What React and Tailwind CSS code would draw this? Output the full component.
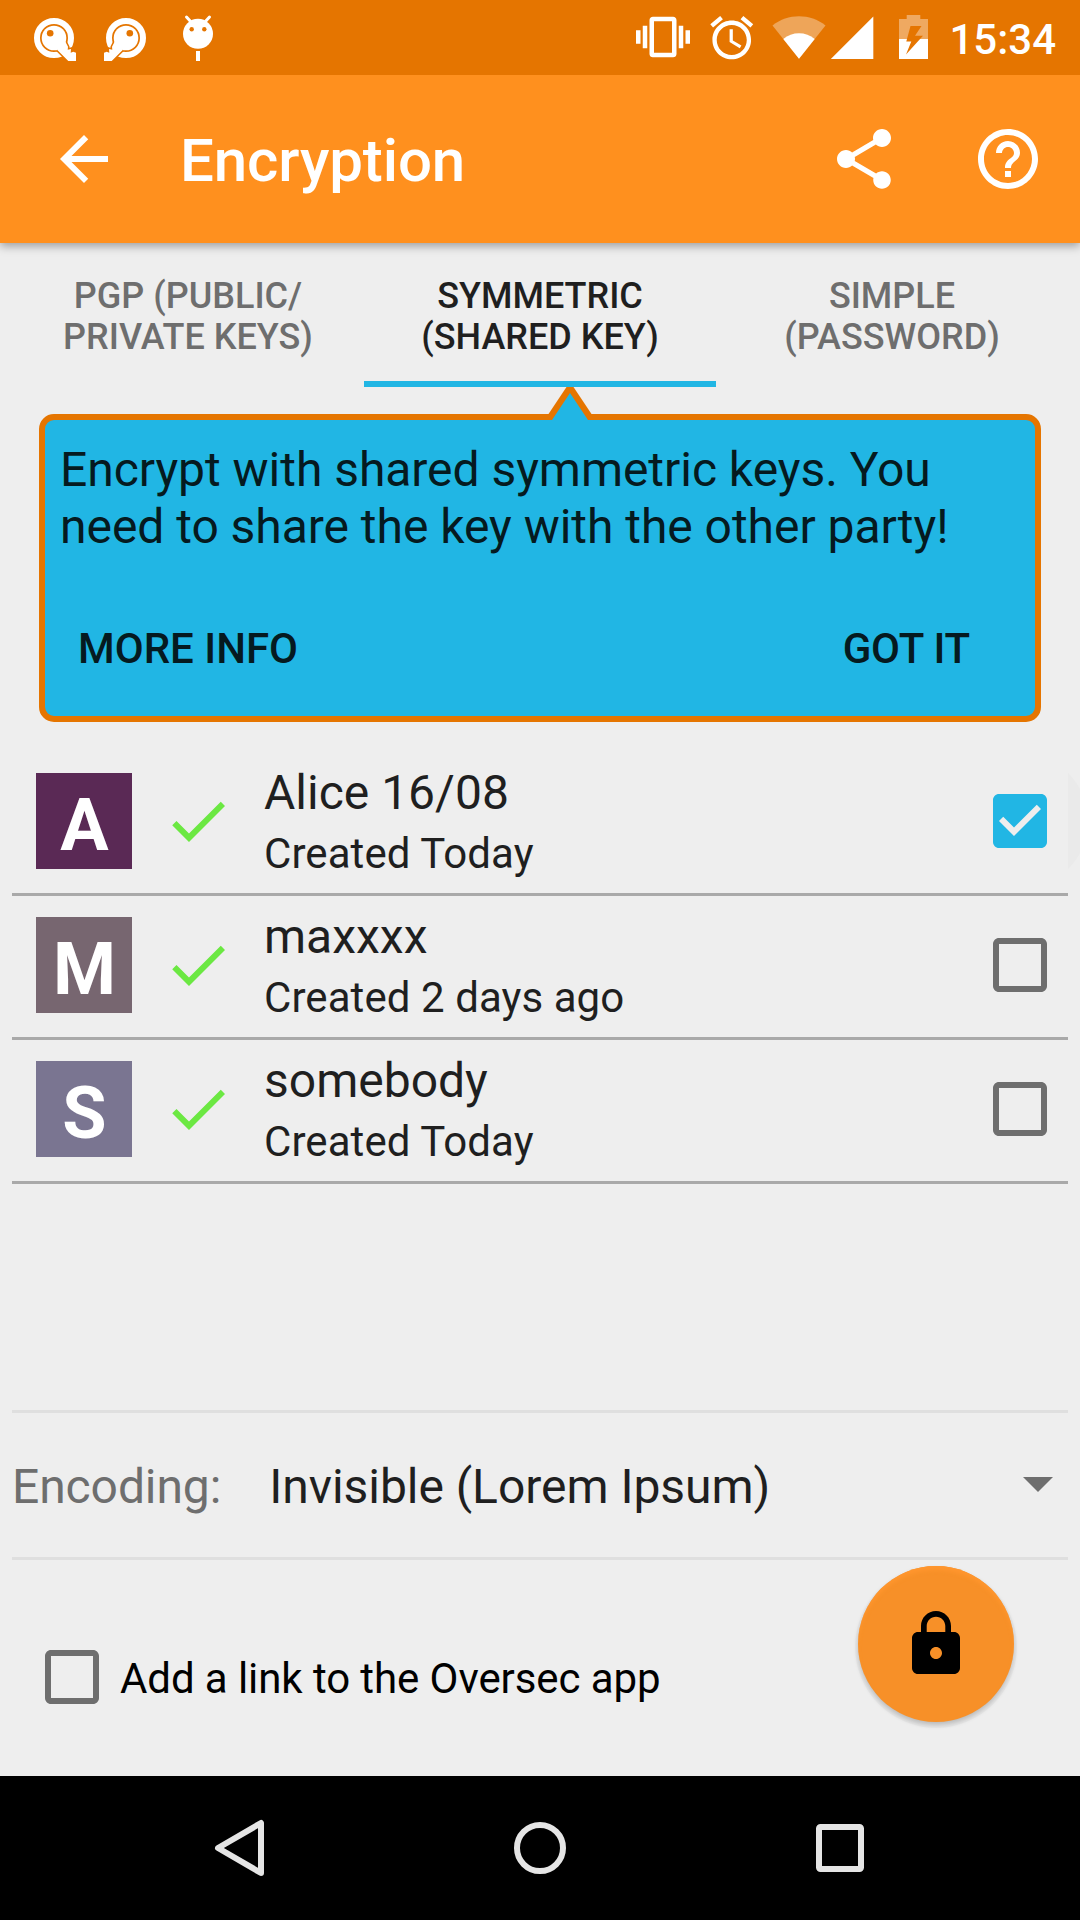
const CHECK = 'M9 16.17L4.83 12l-1.42 1.41L9 19 21 7l-1.41-1.41z';
const CHECK_BOX =
  'M19 3H5c-1.11 0-2 .9-2 2v14c0 1.1.89 2 2 2h14c1.11 0 2-.9 2-2V5c0-1.1-.89-2-2-2zm-9 14l-5-5 1.41-1.41L10 14.17l7.59-7.59L19 8l-9 9z';
const CHECK_BOX_BLANK =
  'M19 5v14H5V5h14m0-2H5c-1.1 0-2 .9-2 2v14c0 1.1.9 2 2 2h14c1.1 0 2-.9 2-2V5c0-1.1-.9-2-2-2z';
const BACK = 'M20 11H7.83l5.59-5.59L12 4l-8 8 8 8 1.41-1.41L7.83 13H20v-2z';
const SHARE =
  'M18 16.08c-.76 0-1.44.3-1.96.77L8.91 12.7c.05-.23.09-.46.09-.7s-.04-.47-.09-.7l7.05-4.11c.54.5 1.25.81 2.04.81 1.66 0 3-1.34 3-3s-1.34-3-3-3-3 1.34-3 3c0 .24.04.47.09.7L8.04 9.81C7.5 9.31 6.79 9 6 9c-1.66 0-3 1.34-3 3s1.34 3 3 3c.79 0 1.5-.31 2.04-.81l7.12 4.16c-.05.21-.08.43-.08.65 0 1.61 1.31 2.92 2.92 2.92 1.61 0 2.92-1.31 2.92-2.92s-1.31-2.92-2.92-2.92z';
const HELP =
  'M11 18h2v-2h-2v2zm1-16C6.48 2 2 6.48 2 12s4.48 10 10 10 10-4.48 10-10S17.52 2 12 2zm0 18c-4.41 0-8-3.59-8-8s3.59-8 8-8 8 3.59 8 8-3.59 8-8 8zm0-14c-2.21 0-4 1.79-4 4h2c0-1.1.9-2 2-2s2 .9 2 2c0 2-3 1.75-3 5h2c0-2.25 3-2.5 3-5 0-2.21-1.79-4-4-4z';
const LOCK =
  'M18 8h-1V6c0-2.76-2.24-5-5-5S7 3.24 7 6v2H6c-1.1 0-2 .9-2 2v10c0 1.1.9 2 2 2h12c1.1 0 2-.9 2-2V10c0-1.1-.9-2-2-2zm-6 9c-1.1 0-2-.9-2-2s.9-2 2-2 2 .9 2 2-.9 2-2 2zm3.1-9H8.9V6c0-1.71 1.39-3.1 3.1-3.1 1.71 0 3.1 1.39 3.1 3.1v2z';
const VIBRATE =
  'M0 15h2V9H0v6zm3 2h2V7H3v10zm19-8v6h2V9h-2zm-3 8h2V7h-2v10zM16.5 3h-9C6.67 3 6 3.67 6 4.5v15c0 .83.67 1.5 1.5 1.5h9c.83 0 1.5-.67 1.5-1.5v-15c0-.83-.67-1.5-1.5-1.5zM16 19H8V5h8v14z';
const ALARM =
  'M22 5.72l-4.6-3.86-1.29 1.53 4.6 3.86L22 5.72zM7.88 3.39L6.6 1.86 2 5.71l1.29 1.53 4.59-3.85zM12.5 8H11v6l4.75 2.85.75-1.23-4-2.37V8zM12 4c-4.97 0-9 4.03-9 9s4.02 9 9 9c4.97 0 9-4.03 9-9s-4.03-9-9-9zm0 16c-3.87 0-7-3.13-7-7s3.13-7 7-7 7 3.13 7 7-3.13 7-7 7z';
const KEY_SHAFT =
  'M27.300 36L38.300 47H46V38.700L43.300 37.700L40.700 38.700L41 35L37.700 35.700L38 32.700L35 27Z';

function Icon({ d, className = 'size-[72px]' }) {
  return (
    <svg viewBox="0 0 24 24" fill="currentColor" className={'shrink-0 ' + className}>
      <path d={d} />
    </svg>
  );
}

function KeyRing({ className = '' }) {
  return (
    <svg viewBox="0 0 48 48" className={'size-12 shrink-0 ' + className}>
      <circle cx="24" cy="24" r="17" fill="none" stroke="#fff" strokeWidth="6" />
      <path d={KEY_SHAFT} fill="#fff" stroke="#e57500" strokeWidth="3" />
      <path d={KEY_SHAFT} fill="#fff" />
      <circle cx="24" cy="24" r="12.300" fill="#fff" />
      <circle cx="20.200" cy="19.300" r="3.300" fill="#e57500" />
    </svg>
  );
}

function StatusBar() {
  return (
    <div className="relative z-20 flex h-[75px] items-start bg-[#e57500] text-white">
      <KeyRing className="ml-[30px] mt-3.5" />
      <KeyRing className="ml-6 mt-3.5 -scale-x-100" />
      <svg viewBox="0 0 36 48" className="ml-[30px] mt-3.5 h-12 w-9 shrink-0">
        <path d="M6.500 3L12 9M29.500 3L24 9" stroke="#fff" strokeWidth="3" strokeLinecap="round" />
        <circle cx="18" cy="19.800" r="15" fill="#fff" />
        <circle cx="11.700" cy="15.300" r="2.200" fill="#e57500" />
        <circle cx="24.300" cy="15.300" r="2.200" fill="#e57500" />
        <path d="M16 37h4v10h-4z" fill="#fff" />
      </svg>
      <div className="ml-auto flex items-start pr-6">
        <Icon d={VIBRATE} className="mt-2.5 size-[54px]" />
        <Icon d={ALARM} className="ml-4 mt-[11.500px] size-[51.500px]" />
        <svg viewBox="0 0 54 44" className="ml-[15px] mt-[15px] h-11 w-[54px] shrink-0">
          <path d="M0.500 10.500C16-1.700 38-1.700 53.500 10.500L27 43.700Z" fill="#fff" fillOpacity=".35" />
          <path d="M11.300 24C20 16.300 34 16.300 42.700 24L27 43.700Z" fill="#fff" />
        </svg>
        <svg viewBox="0 0 44 44" className="ml-1 mt-[15px] size-11 shrink-0">
          <path d="M43.300 1.500V44H0.800Z" fill="#fff" />
        </svg>
        <svg viewBox="0 0 29 44" className="ml-[25px] mt-[15px] h-11 w-[29px] shrink-0">
          <path d="M7.700 0H21.300V4H29V24H0V4H7.700Z" fill="#fff" fillOpacity=".38" />
          <path d="M0 24H29V44H0Z" fill="#fff" />
          <path d="M11.500 11H22.500L16 20.700H24L7 39.500L12.300 26.500H7.300Z" fill="#e57500" />
        </svg>
        <div className="ml-[21px] mt-[15px] text-[42px] font-medium leading-[49px]">15:34</div>
      </div>
    </div>
  );
}

function AppBar() {
  return (
    <header className="relative z-10 flex h-[168px] items-center bg-[#ff901e] px-9 text-white shadow-[0_3px_9px_rgba(0,0,0,0.35)]">
      <Icon d={BACK} className="ml-3 size-[72px]" />
      <h1 className="ml-[60px] mt-[3px] text-[60px] font-medium leading-[70px] tracking-[-0.1px]">Encryption</h1>
      <Icon d={SHARE} className="ml-auto size-[72px]" />
      <Icon d={HELP} className="ml-[72px] size-[72px]" />
    </header>
  );
}

const TABS = [
  { lines: ['PGP (PUBLIC/', 'PRIVATE KEYS)'] },
  { lines: ['SYMMETRIC', '(SHARED KEY)'], active: true },
  { lines: ['SIMPLE', '(PASSWORD)'] },
];

function Tabs() {
  return (
    <nav className="grid h-36 grid-cols-3 px-3">
      {TABS.map((tab) => (
        <div
          key={tab.lines[0]}
          className={
            'border-b-6 pt-[33px] text-center text-[36px] font-medium leading-[41px] ' +
            (tab.active ? 'border-[#21b6e4] text-[#1f1f1f]' : 'border-transparent text-[#6e6e6e]')
          }
        >
          {tab.lines.map((line) => (
            <div key={line}>{line}</div>
          ))}
        </div>
      ))}
    </nav>
  );
}

function Hint() {
  return (
    <section className="relative mx-[39px] mt-[27px] h-[308px] rounded-[15px] border-6 border-[#e57500] bg-[#21b6e4] px-[15px] pt-[21px] text-[#051a20]">
      <svg viewBox="0 0 46 33" className="absolute left-[502px] top-[-33px] h-[33px] w-[46px]">
        <path d="M-1 33L1.500 27L19.500 0H26.500L44.500 27L47 33Z" fill="#e57500" />
        <path d="M5 33L23 6L41 33Z" fill="#21b6e4" />
      </svg>
      <p className="text-[48px] leading-[57px] tracking-[-0.04px]">
        Encrypt with shared symmetric keys. You
        <br />
        need to share the key with the other party!
      </p>
      <div className="mt-[69px] flex justify-between pl-[18px] pr-[50px] text-[42px] font-medium leading-[49px]">
        <span>MORE INFO</span>
        <span className="tracking-[-0.2px]">GOT IT</span>
      </div>
    </section>
  );
}

const KEYS = [
  { letter: 'A', color: 'bg-[#5a2955]', name: 'Alice 16/08', created: 'Created Today', checked: true },
  { letter: 'M', color: 'bg-[#776670]', name: 'maxxxx', created: 'Created 2 days ago' },
  { letter: 'S', color: 'bg-[#7a7591]', name: 'somebody', created: 'Created Today' },
];

function KeyRow({ item }) {
  return (
    <li className="relative flex h-36 items-center border-b-3 border-[#a9a9a9] pl-6 pr-3">
      <div
        className={
          'mb-[3px] flex size-24 items-center justify-center pl-px pt-[9px] text-[72px] font-bold leading-[84px] text-white ' +
          item.color
        }
      >
        {item.letter}
      </div>
      <Icon d={CHECK} className="mb-[3px] ml-[30px] size-[72px] text-[#6be842]" />
      <div className="ml-[30px] self-start pt-[13px] text-[#1f1f1f]">
        <div className="text-[48px] leading-[56px]">{item.name}</div>
        <div className="mt-2 text-[42px] leading-[49px] tracking-[0.07px]">{item.created}</div>
      </div>
      <Icon
        d={item.checked ? CHECK_BOX : CHECK_BOX_BLANK}
        className={'mb-[3px] ml-auto size-[72px] ' + (item.checked ? 'text-[#21b6e4]' : 'text-[#6e6e6e]')}
      />
      {item.checked && (
        <svg viewBox="0 0 12 96" className="absolute -right-3 top-[21px] h-24 w-3">
          <circle cx="-48" cy="48" r="68" fill="#eaeaea" />
        </svg>
      )}
    </li>
  );
}

function EncodingRow() {
  return (
    <div className="mx-3 mt-auto flex h-[150px] items-center border-y-3 border-[#dfdfdf] text-[48px] leading-[56px]">
      <span className="mt-1 tracking-[-0.1px] text-[#6e6e6e]">Encoding:</span>
      <span className="ml-[48px] mt-1 tracking-[-0.04px] text-[#1f1f1f]">Invisible (Lorem Ipsum)</span>
      <Icon d="M7 10l5 5 5-5z" className="-mr-1.5 mb-[5px] ml-auto size-[72px] text-[#6e6e6e]" />
    </div>
  );
}

function BottomRow() {
  return (
    <div className="flex h-[216px] items-start pl-9 pr-[66px]">
      <Icon d={CHECK_BOX_BLANK} className="mt-[81px] size-[72px] text-[#6e6e6e]" />
      <div className="ml-3 mt-[94px] text-[42px] leading-[49px] tracking-[-0.08px] text-black">
        Add a link to the Oversec app
      </div>
      <div className="ml-auto mt-1.5 flex size-[156px] items-center justify-center rounded-full bg-[#f79028] shadow-[0_3px_5px_rgba(0,0,0,0.2),0_3px_0_3px_rgba(0,0,0,0.025),inset_0_5px_4px_-1px_#ff962e]">
        <Icon d={LOCK} className="size-[72px] text-black" />
      </div>
    </div>
  );
}

function NavBar() {
  return (
    <footer className="flex h-36 items-center justify-between bg-black px-[204px]">
      <svg viewBox="0 0 72 72" className="size-[72px]" fill="none" stroke="#e5e5e5" strokeWidth="6" strokeLinejoin="round">
        <path d="M14 36L57 11V61Z" />
      </svg>
      <svg viewBox="0 0 72 72" className="size-[72px]" fill="none" stroke="#e5e5e5" strokeWidth="6">
        <circle cx="36" cy="36" r="23" />
      </svg>
      <svg viewBox="0 0 72 72" className="size-[72px]" fill="none" stroke="#e5e5e5" strokeWidth="6">
        <rect x="15" y="15" width="42" height="42" rx="1.500" />
      </svg>
    </footer>
  );
}

export default function App() {
  return (
    <div className="flex h-[1920px] w-[1080px] flex-col overflow-hidden bg-[#eeeeee] font-['Roboto',sans-serif]">
      <StatusBar />
      <AppBar />
      <Tabs />
      <Hint />
      <ul className="mx-3 mt-[30px]">
        {KEYS.map((item) => (
          <KeyRow key={item.name} item={item} />
        ))}
      </ul>
      <EncodingRow />
      <BottomRow />
      <NavBar />
    </div>
  );
}
